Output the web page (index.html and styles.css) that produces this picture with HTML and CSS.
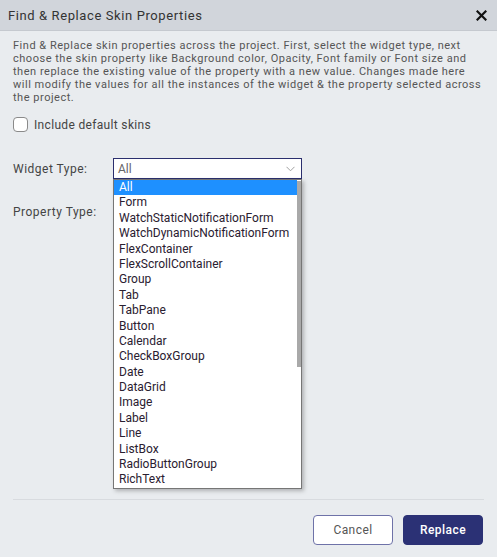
FILE: index.html
```html
<!DOCTYPE html>
<html>
<head>
<meta charset="utf-8">
<link rel="stylesheet" href="styles.css">
</head>
<body>
<div class="dialog">
  <div class="titlebar">
    <span class="title">Find &amp; Replace Skin Properties</span>
    <svg class="close" width="11" height="11" viewBox="0 0 11 11"><path d="M1.5 1.5 L9.5 9.5 M9.5 1.5 L1.5 9.5" stroke="#111" stroke-width="2.2" stroke-linecap="square"/></svg>
  </div>
  <div class="body">
    <p class="desc">Find &amp; Replace skin properties across the project. First, select the widget type, next choose the skin property like Background color, Opacity, Font family or Font size and then replace the existing value of the property with a new value. Changes made here will modify the values for all the instances of the widget &amp; the property selected across the project.</p>
    <label class="check"><span class="box"></span><span>Include default skins</span></label>
    <div class="row widget-row">
      <span class="label">Widget Type:</span>
      <div class="select-wrap">
        <div class="select">
          <span>All</span>
          <svg class="chev" width="9" height="6" viewBox="0 0 9 6"><path d="M0.5 0.8 L4.5 4.8 L8.5 0.8" fill="none" stroke="#a0a0a0" stroke-width="1"/></svg>
        </div>
        <div class="list">
          <div class="items">
            <div class="item sel">All</div>
            <div class="item">Form</div>
            <div class="item">WatchStaticNotificationForm</div>
            <div class="item">WatchDynamicNotificationForm</div>
            <div class="item">FlexContainer</div>
            <div class="item">FlexScrollContainer</div>
            <div class="item">Group</div>
            <div class="item">Tab</div>
            <div class="item">TabPane</div>
            <div class="item">Button</div>
            <div class="item">Calendar</div>
            <div class="item">CheckBoxGroup</div>
            <div class="item">Date</div>
            <div class="item">DataGrid</div>
            <div class="item">Image</div>
            <div class="item">Label</div>
            <div class="item">Line</div>
            <div class="item">ListBox</div>
            <div class="item">RadioButtonGroup</div>
            <div class="item">RichText</div>
          </div>
          <div class="scroll"><div class="thumb"></div></div>
        </div>
      </div>
    </div>
    <div class="row prop-row">
      <span class="label">Property Type:</span>
    </div>
  </div>
  <div class="footer">
    <button class="btn cancel">Cancel</button>
    <button class="btn replace">Replace</button>
  </div>
</div>
</body>
</html>
```

FILE: styles.css
```css
* { box-sizing: border-box; }
html, body { margin: 0; padding: 0; }
body {
  width: 497px;
  height: 557px;
  background: #e9ecef;
  font-family: Roboto, "Liberation Sans", sans-serif;
  overflow: hidden;
}
.dialog {
  display: flex;
  flex-direction: column;
  height: 557px;
}
.titlebar {
  height: 31px;
  background: #d1d5db;
  border-bottom: 1px solid #c5c9cf;
  display: flex;
  align-items: center;
  justify-content: space-between;
  padding: 0 10px 0 8px;
}
.title {
  font-size: 13px;
  color: #333;
  letter-spacing: 0.6px;
}
.close { display: block; }
.body {
  flex: 1;
  padding: 8px 13px 0 13px;
}
.desc {
  margin: 0;
  font-size: 11px;
  line-height: 13px;
  color: #555;
  width: 471px;
  letter-spacing: 0.52px;
}
.check {
  display: flex;
  align-items: center;
  gap: 6px;
  margin-top: 13px;
  font-size: 12px;
  color: #444;
  letter-spacing: 0.33px;
}
.box {
  width: 15px;
  height: 15px;
  background: #fff;
  border: 1px solid #8a8a8a;
  border-radius: 4px;
}
.row {
  display: flex;
  align-items: flex-start;
}
.label {
  width: 100px;
  font-size: 12px;
  color: #444;
  letter-spacing: 0.5px;
}
.widget-row { margin-top: 26px; }
.widget-row .label { padding-top: 4px; }
.select-wrap {
  position: relative;
  width: 189px;
}
.select {
  height: 21px;
  border: 1px solid #2b2f6e;
  background: #fff;
  display: flex;
  align-items: center;
  justify-content: space-between;
  padding: 0 6px 0 4px;
  font-size: 12px;
  color: #666;
}
.chev { display: block; margin-top: 1px; }
.list {
  position: absolute;
  top: 21px;
  left: 0;
  width: 189px;
  height: 310px;
  background: #fff;
  border: 1px solid #767676;
  box-shadow: 2px 2px 4px rgba(0,0,0,0.25);
  display: flex;
  z-index: 2;
}
.items { flex: 1; }
.item {
  height: 15.4px;
  line-height: 15.4px;
  font-size: 12px;
  color: #2a2030;
  padding-left: 5px;
  white-space: nowrap;
}
.item.sel {
  background: #1e90ff;
  color: #fff;
}
.scroll {
  width: 4px;
  background: #fff;
  padding-top: 1px;
}
.thumb {
  height: 186px;
  background: #a9a9a9;
}
.prop-row { margin-top: 26px; }
.footer {
  margin: 0 13px;
  border-top: 1px solid #d8dbdf;
  height: 58px;
  display: flex;
  justify-content: flex-end;
  align-items: flex-start;
  padding-top: 15px;
  gap: 10px;
}
.btn {
  width: 80px;
  height: 30px;
  border-radius: 4px;
  font-family: Roboto, "Liberation Sans", sans-serif;
  font-size: 12px;
  letter-spacing: 0.45px;
  cursor: pointer;
}
.cancel {
  background: #fff;
  border: 1px solid #6e72a8;
  color: #555;
}
.replace {
  background: #2b3175;
  border: 1px solid #2b3175;
  color: #fff;
  font-weight: 500;
  margin-right: 1px;
}
```
